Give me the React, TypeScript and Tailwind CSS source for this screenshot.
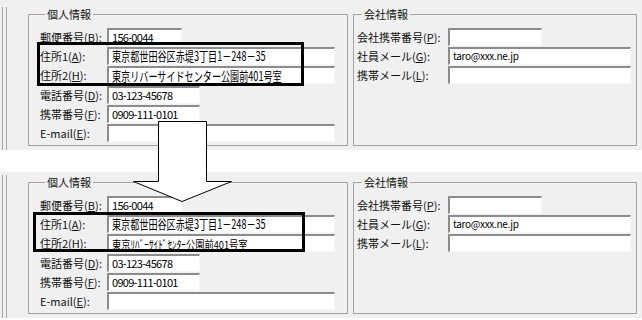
import React from "react";

type Row = {
  name: string;
  key: string;
  width: string;
  value?: string;
  kind?: "big" | "mono" | "half" | "mail";
};

const personalTop: Row[] = [
  { name: "郵便番号", key: "B", width: "w-[75px]", value: "156-0044", kind: "mono" },
  { name: "住所1", key: "A", width: "w-[228px]", value: "東京都世田谷区赤堤3丁目1－248－35", kind: "big" },
  { name: "住所2", key: "H", width: "w-[228px]", value: "東京リバーサイドセンター公園前401号室", kind: "big" },
  { name: "電話番号", key: "D", width: "w-[93px]", value: "03-123-45678", kind: "mono" },
  { name: "携帯番号", key: "F", width: "w-[93px]", value: "0909-111-0101", kind: "mono" },
  { name: "E-mail", key: "E", width: "w-[228px]" },
];

// 下の画面は住所2が半角カナに変換された状態
const personalBottom: Row[] = personalTop.map((r) =>
  r.key === "H" ? { ...r, value: "東京ﾘﾊﾞｰｻｲﾄﾞｾﾝﾀｰ公園前401号室", kind: "half" } : r
);

const company: Row[] = [
  { name: "会社携帯番号", key: "P", width: "w-[94px]" },
  { name: "社員メール", key: "G", width: "w-[183px]", value: "taro@xxx.ne.jp", kind: "mail" },
  { name: "携帯メール", key: "L", width: "w-[183px]" },
];

const Value = ({ row }: { row: Row }) => {
  if (!row.value) return null;
  if (row.kind === "big")
    return (
      <span className="inline-block origin-left scale-x-[0.7] whitespace-nowrap text-[13px] leading-[14px]">
        {row.value}
      </span>
    );
  if (row.kind === "half")
    return (
      <span className="inline-block origin-left scale-x-[0.84] whitespace-nowrap text-[11px] leading-[14px]">
        {row.value}
      </span>
    );
  if (row.kind === "mono")
    return <span className="whitespace-nowrap text-[11px] leading-[14px] tracking-[-0.7px]">{row.value}</span>;
  return <span className="whitespace-nowrap text-[10px] leading-[14px] tracking-[-0.3px]">{row.value}</span>;
};

const FieldRow = ({ row, labelW }: { row: Row; labelW: string }) => (
  <div className="flex h-[19.3px] items-center">
    <span className={`${labelW} shrink-0 whitespace-nowrap text-[11px] leading-[14px] text-[#111]`}>
      {row.name}(<span className="underline">{row.key}</span>):
    </span>
    <div
      className={`${row.width} flex h-[18px] shrink-0 items-center overflow-hidden border-t-2 border-l-2 border-b border-r border-t-[#8c8c8c] border-l-[#8c8c8c] border-b-[#f7f7f7] border-r-[#f7f7f7] bg-white pl-[3px]`}
    >
      <Value row={row} />
    </div>
  </div>
);

const Group = ({
  title,
  rows,
  className,
  labelW,
}: {
  title: string;
  rows: Row[];
  className: string;
  labelW: string;
}) => (
  <fieldset className={`h-[139px] border border-[#a3a3a3] ${className}`}>
    <legend className="ml-[5px] px-[2px] text-[11px] leading-[14px] text-[#111]">{title}</legend>
    <div className="flex flex-col pt-[6px]">
      {rows.map((r) => (
        <FieldRow key={r.key} row={r} labelW={labelW} />
      ))}
    </div>
  </fieldset>
);

const Screen = ({
  rows,
  className,
  boxClass,
}: {
  rows: Row[];
  className: string;
  boxClass: string;
}) => (
  <div className={`relative flex bg-[#f0f0f0] ${className}`}>
    <div className="ml-[2px] w-px bg-[#a8a8a8]" />
    <div className="ml-[3px] w-px bg-[#a8a8a8]" />
    <div className="ml-[21px] flex gap-[5px]">
      <Group title="個人情報" rows={rows} className="w-[320px] pl-[11px]" labelW="w-[67px]" />
      <Group title="会社情報" rows={company} className="w-[284px] pl-[3px]" labelW="w-[91px]" />
    </div>
    <div className={`absolute border-[3px] border-black ${boxClass}`} />
  </div>
);

export default function App() {
  return (
    <div
      className="relative h-[320px] w-[642px] overflow-hidden bg-white text-black"
      style={{ fontFamily: '"Noto Sans CJK JP", "Noto Sans", sans-serif' }}
    >
      <Screen
        rows={personalTop}
        className="h-[150px] pt-[7px]"
        boxClass="left-[37px] top-[42px] h-[44px] w-[267px]"
      />
      <div className="h-[22px]" />
      <Screen
        rows={personalBottom}
        className="h-[146px] pt-[3px]"
        boxClass="left-[33px] top-[40px] h-[40px] w-[272px]"
      />
      <svg className="absolute left-0 top-0" width="642" height="320">
        <polygon
          points="158.5,121.5 206.5,121.5 206.5,181.5 231.5,181.5 182,201.5 133.5,181.5 158.5,181.5"
          fill="white"
          stroke="black"
          strokeWidth="1"
        />
      </svg>
    </div>
  );
}
